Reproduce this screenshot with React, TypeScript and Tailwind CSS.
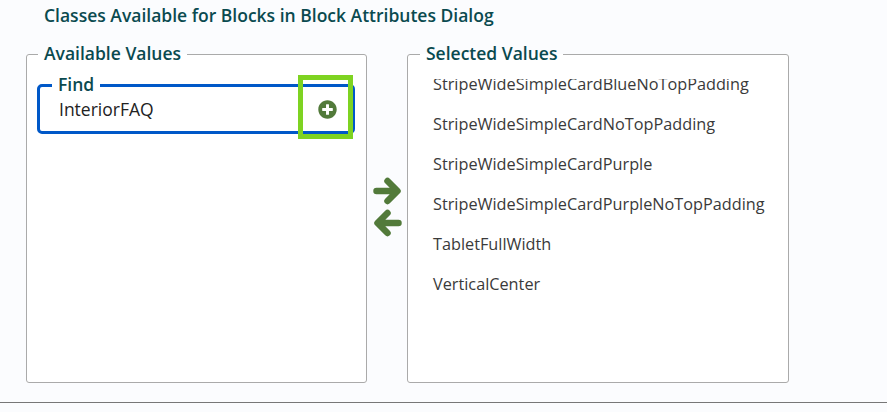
import { FaPlusCircle } from "react-icons/fa";

const SELECTED = [
  "StripeWideSimpleCardBlueNoTopPadding",
  "StripeWideSimpleCardNoTopPadding",
  "StripeWideSimpleCardPurple",
  "StripeWideSimpleCardPurpleNoTopPadding",
  "TabletFullWidth",
  "VerticalCenter",
];

function RightArrow() {
  return (
    <svg width="28" height="28" viewBox="0 0 28 28" fill="none" stroke="#527a3a" strokeWidth="6.5" strokeLinecap="round" strokeLinejoin="round">
      <path d="M3.5 14H24M14.5 4l10 10-10 10" />
    </svg>
  );
}

function LeftArrow() {
  return (
    <svg width="28" height="28" viewBox="0 0 28 28" fill="none" stroke="#527a3a" strokeWidth="6.5" strokeLinecap="round" strokeLinejoin="round">
      <path d="M24.5 14H4M13.5 4l-10 10 10 10" />
    </svg>
  );
}

export default function App() {
  return (
    <div className="flex h-[412px] w-full flex-col overflow-hidden bg-[#fbfcfe] font-['Open_Sans',sans-serif] text-[#333]">
      <h1 className="h-[42px] pl-[44px] pt-[4px] text-[17.5px] leading-[22px] font-semibold text-[#0a4a4f]">
        Classes Available for Blocks in Block Attributes Dialog
      </h1>

      <div className="flex h-[341px] items-start pl-[26px]">
        <fieldset className="h-[341px] w-[341px] rounded-[3px] border border-[#aaa] bg-white px-[10px]">
          <legend className="ml-[1px] px-[6px] pb-[2px] text-[17.5px] leading-[22px] font-semibold text-[#0a4a4f]">
            Available Values
          </legend>
          <div className="relative mt-[7px]">
            <fieldset className="h-[61px] w-[318px] rounded-[5px] border-[3px] border-[#0058c8] bg-white pl-[19px]">
              <legend className="-ml-[7px] bg-white px-[6px] pb-[2px] text-[17.5px] leading-[22px] font-semibold text-[#0a4a4f]">
                Find
              </legend>
              <div className="text-[17.5px] leading-[24px] text-[#222]">InteriorFAQ</div>
            </fieldset>
            <div className="absolute top-[2px] left-[261px] flex h-[64px] w-[55px] items-center justify-center border-[5px] border-[#7ed321]">
              <FaPlusCircle className="mt-[4px] ml-[4px] text-[19px] text-[#527a3a]" />
            </div>
          </div>
        </fieldset>

        <div className="flex h-[341px] w-[40px] flex-col items-start pt-[135px] pl-[6px]">
          <RightArrow />
          <div className="mt-[4px] ml-[1px]">
            <LeftArrow />
          </div>
        </div>

        <fieldset className="h-[341px] w-[382px] rounded-[3px] border border-[#aaa] bg-white">
          <legend className="ml-[12px] px-[6px] pb-[2px] text-[17.5px] leading-[22px] font-semibold text-[#0a4a4f]">
            Selected Values
          </legend>
          <div className="mt-[13px] h-[300px] overflow-hidden pl-[25px]">
            <ul className="-mt-[15px]">
              {SELECTED.map((name) => (
                <li key={name} className="flex h-[40px] items-center text-[16.25px] whitespace-nowrap text-[#3a3a3a]">
                  {name}
                </li>
              ))}
            </ul>
          </div>
        </fieldset>
      </div>

      <div className="mt-[19px] h-[1px] shrink-0 bg-[#777]" />
    </div>
  );
}
